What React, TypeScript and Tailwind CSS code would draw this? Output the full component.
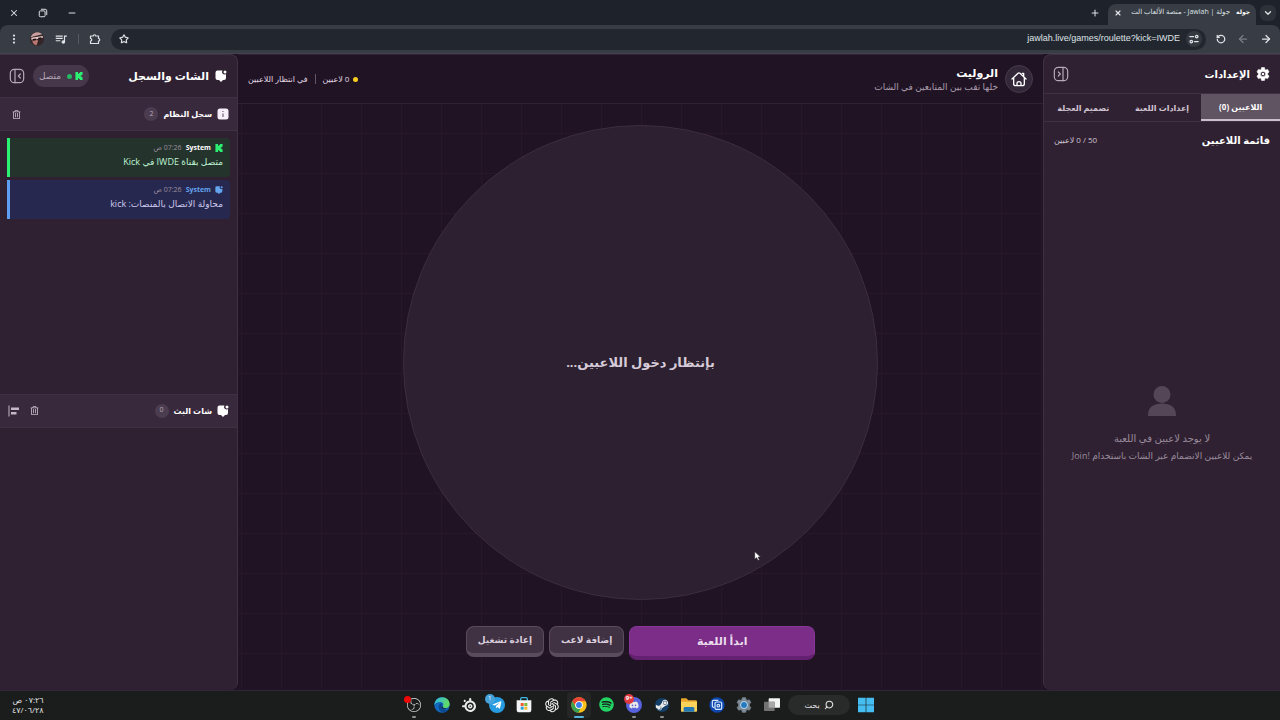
import type { ReactNode } from "react";
import {
  ArrowLeft, ArrowRight, ChevronDown, EllipsisVertical, Minus, Plus, RotateCcw, Search, Star, X,
} from "lucide-react";
import { FaDiscord, FaSpotify, FaSteamSymbol, FaTelegramPlane, FaRegTrashAlt } from "react-icons/fa";
import { MdQueueMusic } from "react-icons/md";
import { SiObsstudio, SiSteelseries } from "react-icons/si";
import { AiOutlineOpenAI } from "react-icons/ai";

function KickIcon({ className }: { className: string }) {
  return (
    <svg viewBox="0 0 24 24" className={className} fill="currentColor" aria-hidden="true">
      <path d="M1.3 0h8v5.3H12V2.7h2.7V0h8v8H20v2.7h-2.7v2.6H20V16h2.7v8h-8v-2.7H12v-2.6H9.3V24h-8Z" />
    </svg>
  );
}

function ChatIcon({ className }: { className: string }) {
  return (
    <svg viewBox="0 0 24 24" className={className} fill="currentColor" aria-hidden="true">
      <path d="M5 1h10a5 5 0 0 0 7 7v8a4 4 0 0 1-4 4h-2l-4 4-4-4H5a4 4 0 0 1-4-4V5a4 4 0 0 1 4-4Z" />
      <circle cx="20" cy="4" r="3" />
    </svg>
  );
}

function InfoIcon() {
  return (
    <svg viewBox="0 0 24 24" className="size-3" aria-hidden="true">
      <rect x="1" y="1" width="22" height="22" rx="5" fill="#f6eef8" />
      <path d="M12 11v7M12 6v2" stroke="#7b6c7e" strokeWidth="2.6" />
    </svg>
  );
}

function GearIcon({ className }: { className: string }) {
  return (
    <svg viewBox="0 0 24 24" className={className} aria-hidden="true">
      <path
        fill="currentColor"
        stroke="currentColor"
        strokeLinejoin="round"
        fillRule="evenodd"
        d="M9.5 1h5l.7 3.2 1.6.9 3.1-1 2.5 4.3-2.4 2.2v2.8l2.4 2.2-2.5 4.3-3.1-1-1.6.9-.7 3.2h-5l-.7-3.2-1.6-.9-3.1 1-2.5-4.3L4 13.4v-2.8L1.6 8.4l2.5-4.3 3.1 1 1.6-.9ZM12 7.5a4.5 4.5 0 1 0 0 9 4.5 4.5 0 0 0 0-9Z"
      />
      <circle cx="12" cy="12" r="2.200" fill="currentColor" />
    </svg>
  );
}

function PanelToggleIcon({ side }: { side: "left" | "right" }) {
  return (
    <svg viewBox="0 0 24 24" className="size-4" fill="none" stroke="currentColor" strokeWidth="1.8" strokeLinecap="round" strokeLinejoin="round" aria-hidden="true">
      <rect x="2" y="2" width="20" height="20" rx="6" />
      {side === "left" ? <path d="M9 2v20M17 9l-3 3 3 3" /> : <path d="M15 2v20M8 9l3 3-3 3" />}
    </svg>
  );
}

function HomeIcon() {
  return (
    <svg viewBox="0 0 24 24" className="size-4" fill="none" stroke="currentColor" strokeWidth="2" strokeLinecap="round" strokeLinejoin="round" aria-hidden="true">
      <path d="m1.5 12 9-8.5a2.2 2.2 0 0 1 3 0l9 8.5M4 10v9a3 3 0 0 0 3 3h10a3 3 0 0 0 3-3v-9M19 8V3.5h-2M9 22v-3a3 3 0 0 1 6 0v3" />
    </svg>
  );
}

function TuneIcon() {
  return (
    <svg viewBox="0 0 24 24" className="size-2.5" fill="none" stroke="currentColor" strokeWidth="3" strokeLinecap="round" aria-hidden="true">
      <path d="M2 6h9M13 18h9" />
      <circle cx="18.5" cy="6" r="3" />
      <circle cx="5.5" cy="18" r="3" />
    </svg>
  );
}

function ExtensionIcon() {
  return (
    <svg viewBox="0 0 24 24" className="size-3" fill="none" stroke="currentColor" strokeWidth="2.4" strokeLinejoin="round" aria-hidden="true">
      <path d="M3 6h5.500a2.500 2.500 0 0 1 5 0H19v5a2.500 2.500 0 0 1 0 5v5H3v-5a2.500 2.500 0 0 0 0-5Z" />
    </svg>
  );
}

function RestoreIcon() {
  return (
    <svg viewBox="0 0 24 24" className="size-2.5" fill="none" stroke="currentColor" strokeWidth="2.4" strokeLinejoin="round" aria-hidden="true">
      <rect x="3" y="7" width="14" height="14" rx="2.500" />
      <path d="M7 3h10a4 4 0 0 1 4 4v10" />
    </svg>
  );
}

function AlignIcon() {
  return (
    <svg viewBox="0 0 24 24" className="size-3" fill="none" stroke="currentColor" aria-hidden="true">
      <path d="M2 1v22" strokeWidth="2" />
      <path d="M6 7.5h16M6 16.5h11" strokeWidth="5" />
    </svg>
  );
}

function AvatarIcon() {
  return (
    <svg viewBox="0 0 24 24" className="size-3.5" aria-hidden="true">
      <circle cx="12" cy="12" r="12" fill="#332528" />
      <path d="M1 9a12 12 0 0 1 20-5L9 7Z" fill="#c9a0a0" />
      <path d="m2 10 20-3v3L3 14Z" fill="#f0cccc" />
      <path d="M4 14c5-2 8-1 10 1l-3 8C7 22 4 19 4 14Z" fill="#b87672" />
      <path d="m4 12 7-1-1 3-5 1Zm10-2 6-1-2 4-4-1Z" fill="#161214" />
    </svg>
  );
}

function EdgeIcon() {
  return (
    <svg viewBox="0 0 24 24" className="size-4" aria-hidden="true">
      <defs>
        <linearGradient id="edge-top" x1="0" y1="0" x2="1" y2="0.4">
          <stop offset="0" stopColor="#2bb5ec" />
          <stop offset="1" stopColor="#63dc62" />
        </linearGradient>
      </defs>
      <circle cx="12" cy="12" r="11.5" fill="#1268bd" />
      <path d="M.5 12C1 5 6 .5 12 .5c7 0 11.500 5 11.500 10 0 4-3 6-6 6-3.500 0-5-1.500-4-3 2-3-1-6-4.500-6-4 0-7 2-8.500 4.500Z" fill="url(#edge-top)" />
      <path d="M7.500 12c-2 6 2 11 7 11 3 0 6-2 8-5-5 3-11 1-11-4 0-2 1-3 1-4-2-1-4 0-5 2Z" fill="#0c4b93" />
      <path d="M11.500 13c-1 4 4 7 9 4-4 1-7 0-7.500-2Z" fill="#191b1b" />
    </svg>
  );
}

function ChromeIcon() {
  return (
    <svg viewBox="0 0 24 24" className="size-4" aria-hidden="true">
      <circle cx="12" cy="12" r="11.5" fill="#fbc116" />
      <path d="M2 6.3A11.5 11.5 0 0 1 22 6.3H12A5.7 5.7 0 0 0 7 14.8Z" fill="#e94435" />
      <path d="M2 6.3 7.100 15a5.700 5.700 0 0 0 7.500 2L11 23.500A11.500 11.500 0 0 1 2 6.300Z" fill="#34a353" />
      <circle cx="12" cy="12" r="5.7" fill="#fff" />
      <circle cx="12" cy="12" r="4.4" fill="#3c7fea" />
    </svg>
  );
}

function StoreIcon() {
  return (
    <svg viewBox="0 0 24 24" className="size-4" aria-hidden="true">
      <path d="M7 6V3a2 2 0 0 1 2-2h6a2 2 0 0 1 2 2v3" fill="none" stroke="#3fb7e4" strokeWidth="2" />
      <path d="M1 5h22v14a4 4 0 0 1-4 4H5a4 4 0 0 1-4-4Z" fill="#f3f5f6" />
      <path d="M7 9h4.5v4.500H7Z" fill="#ed5a33" />
      <path d="M12.500 9H17v4.500h-4.500Z" fill="#7fb93c" />
      <path d="M7 14.500h4.500V19H7Z" fill="#2da0dc" />
      <path d="M12.500 14.500H17V19h-4.500Z" fill="#f7b92b" />
    </svg>
  );
}

function FolderIcon() {
  return (
    <svg viewBox="0 0 24 24" className="size-4" aria-hidden="true">
      <path d="M0 3a1 1 0 0 1 1-1h7l3 3h11a2 2 0 0 1 2 2v4H0Z" fill="#e8a62c" />
      <path d="M0 7h24v14a1 1 0 0 1-1 1H1a1 1 0 0 1-1-1Z" fill="#fbd35a" />
      <path d="M4 22v-5a2 2 0 0 1 2-2h12a2 2 0 0 1 2 2v5Z" fill="#2378b5" />
    </svg>
  );
}

function CopyAppIcon() {
  return (
    <svg viewBox="0 0 24 24" className="size-4" aria-hidden="true">
      <circle cx="12" cy="12" r="11.5" fill="#0d47ae" />
      <g fill="none" stroke="#d8e9ff" strokeWidth="1.8">
        <path d="M8 15.500H7a2 2 0 0 1-2-2V7a2 2 0 0 1 2-2h7" />
        <rect x="9" y="7.500" width="10" height="11" rx="2" />
        <circle cx="14" cy="13" r="2" />
      </g>
    </svg>
  );
}

function TaskViewIcon() {
  return (
    <svg viewBox="0 0 24 24" className="size-4" aria-hidden="true">
      <rect x="7" y="2" width="17" height="14" rx="1" fill="#f3f3f3" />
      <rect x="0" y="7" width="16" height="14" rx="1" fill="#727272" />
      <path d="M7 7h9v9H7Z" fill="#a8a8a8" />
    </svg>
  );
}

function WindowsIcon() {
  return (
    <svg viewBox="0 0 24 24" className="size-4" aria-hidden="true">
      <path d="M0 1h11.500v10.500H0Zm12.500 0H24v10.500H12.500ZM0 12.500h11.500V23H0Zm12.500 0H24V23H12.500Z" fill="#45bdf1" />
    </svg>
  );
}

function SettingsAppIcon() {
  return (
    <span className="relative flex text-[#7e8b96]">
      <GearIcon className="size-4" />
      <span className="absolute inset-1 rounded-full border border-[#b9d8ee] bg-[#2678bd]" />
    </span>
  );
}

function TaskApp({ label, mark, badge, children }: { label: string; mark?: "open" | "active"; badge?: ReactNode; children: ReactNode }) {
  return (
    <button
      type="button"
      aria-label={label}
      className={`relative flex h-[26px] w-6 items-center justify-center rounded-sm text-[#e9e9e9] ${mark === "active" ? "bg-[#262626]" : ""}`}
    >
      {children}
      {badge}
      {mark === "open" && <span className="absolute bottom-0 h-0.5 w-1 rounded-full bg-[#8d8d8d]" />}
      {mark === "active" && <span className="absolute bottom-0 h-0.5 w-2.5 rounded-full bg-[#55b4dc]" />}
    </button>
  );
}

function BrowserBar() {
  return (
    <header className="shrink-0 bg-[#1d222b] text-[#dfe2e6]">
      <div className="flex h-[25px] items-center ps-1">
        <button type="button" aria-label="البحث في علامات التبويب" className="flex size-4 items-center justify-center rounded-md bg-[#2d323a]">
          <ChevronDown className="size-2.5" strokeWidth={3} />
        </button>
        <div className="ms-1 flex h-[21px] items-center gap-1.5 self-end rounded-t-lg bg-[#383d45] px-1.5 pb-1">
          <span className="text-[6px] font-bold text-white">جولة</span>
          <span className="w-[102px] text-[7px] whitespace-nowrap">جولة | Jawlah - منصة الألعاب الت</span>
          <button type="button" aria-label="إغلاق علامة التبويب">
            <X className="size-2" strokeWidth={3.5} />
          </button>
        </div>
        <button type="button" aria-label="علامة تبويب جديدة" className="ms-2">
          <Plus className="size-2.5" strokeWidth={2.5} />
        </button>
        <div className="ms-auto flex items-center gap-[19px] pe-[9px]">
          <button type="button" aria-label="تصغير"><Minus className="size-2.5" strokeWidth={2.5} /></button>
          <button type="button" aria-label="استعادة"><RestoreIcon /></button>
          <button type="button" aria-label="إغلاق"><X className="size-2.5" strokeWidth={2.5} /></button>
        </div>
      </div>
      <div className="flex h-[29px] items-center rounded-t-lg border-b border-[#42444b] bg-[#383d45] px-2">
        <div className="flex items-center gap-[11px]">
          <button type="button" aria-label="للأمام"><ArrowRight className="size-3" strokeWidth={2.5} /></button>
          <button type="button" aria-label="رجوع" className="text-[#787d84]"><ArrowLeft className="size-3" strokeWidth={2.5} /></button>
          <button type="button" aria-label="إعادة تحميل"><RotateCcw className="size-2.5" strokeWidth={3} /></button>
        </div>
        <div className="ms-2.5 flex h-[21px] flex-1 items-center gap-1.5 rounded-full bg-[#22272f] px-1">
          <span className="flex size-4 items-center justify-center rounded-full bg-[#343941]"><TuneIcon /></span>
          <input
            type="text"
            dir="ltr"
            aria-label="شريط العنوان"
            defaultValue="jawlah.live/games/roulette?kick=IWDE"
            className="min-w-0 flex-1 bg-transparent text-right font-['Liberation_Sans',sans-serif] text-[9px] outline-none"
          />
          <button type="button" aria-label="إضافة إشارة" className="pe-1"><Star className="size-2.5" strokeWidth={2.8} /></button>
        </div>
        <div className="ms-2.5 flex items-center gap-2.5">
          <button type="button" aria-label="الإضافات"><ExtensionIcon /></button>
          <span className="h-2.5 w-px bg-[#555a61]" />
          <button type="button" aria-label="الوسائط"><MdQueueMusic className="size-3.5" /></button>
          <button type="button" aria-label="الملف الشخصي"><AvatarIcon /></button>
          <button type="button" aria-label="القائمة"><EllipsisVertical className="size-3" strokeWidth={2.5} /></button>
        </div>
      </div>
    </header>
  );
}

function SettingsPanel() {
  return (
    <aside className="flex w-[237px] shrink-0 flex-col overflow-hidden rounded-l-lg border-e border-t border-[#403044] bg-[#2f2131]">
      <div className="flex h-[38px] items-center justify-between ps-2.5 pe-[9px]">
        <h2 className="flex items-center gap-1.5 text-[10px] font-bold text-white">
          <GearIcon className="size-3.5" />
          الإعدادات
        </h2>
        <button type="button" aria-label="طي الإعدادات" className="text-[#b6a8b9]"><PanelToggleIcon side="right" /></button>
      </div>
      <div className="grid h-[29px] grid-cols-3 border-y border-[#403044] text-[8px] font-bold text-[#cfc4d1]">
        <button type="button" className="border-b-2 border-[#cbbfce] bg-[#605362] text-white">اللاعبين (0)</button>
        <button type="button">إعدادات اللعبة</button>
        <button type="button">تصميم العجلة</button>
      </div>
      <div className="flex h-9 items-center justify-between px-2.5">
        <h3 className="text-[10px] font-bold text-white">قائمة اللاعبين</h3>
        <span className="text-[8px] text-[#cfc4d1]">50 / 0 لاعبين</span>
      </div>
      <div className="flex flex-1 flex-col items-center justify-center">
        <svg viewBox="0 0 28 30" className="h-[30px] w-7" fill="#554657" aria-hidden="true">
          <circle cx="14" cy="8.5" r="8.5" />
          <path d="M0 30v-1c0-8 6-11.500 14-11.500S28 21 28 29v1Z" />
        </svg>
        <p className="mt-4 text-[10px] leading-3 text-[#9a8c9d]">لا يوجد لاعبين في اللعبة</p>
        <p className="mt-1.5 text-[9px] leading-3 text-[#9a8c9d]">يمكن للاعبين الانضمام عبر الشات باستخدام <bdi dir="rtl">!Join</bdi></p>
      </div>
    </aside>
  );
}

function Wheel() {
  return (
    <main className="flex min-w-0 flex-1 flex-col bg-[#201324] bg-[linear-gradient(to_right,#281729_1px,transparent_1px),linear-gradient(to_bottom,#281729_1px,transparent_1px)] bg-size-[40px_40px] bg-position-[3px_39px]">
      <div className="flex h-[50px] shrink-0 items-center justify-between border-y border-[#302136] bg-[#201324] px-2.5">
        <div className="flex items-center gap-[7px]">
          <button type="button" aria-label="الرئيسية" className="flex size-7 items-center justify-center rounded-full border border-[#463a4b] bg-[#33273a] text-white">
            <HomeIcon />
          </button>
          <div>
            <h1 className="text-[11px] leading-4 font-bold text-white">الروليت</h1>
            <p className="text-[9px] leading-3 text-[#aa9dac]">خلها تقب بين المتابعين في الشات</p>
          </div>
        </div>
        <div className="flex items-center gap-[7px] text-[8px] text-[#e1d7e3]">
          <span className="flex items-center gap-1"><span className="size-[5px] rounded-full bg-[#f8cd21]" />0 لاعبين</span>
          <span className="h-2.5 w-px bg-[#66566a]" />
          <span>في انتظار اللاعبين</span>
        </div>
      </div>
      <div className="flex min-h-0 flex-1 justify-center pt-[21px]">
        <div className="flex aspect-square h-full items-center justify-center rounded-full border border-[#3c2d40] bg-[#2d2030]">
          <p className="text-[13px] font-bold text-[#d6cbd8]">بإنتظار دخول اللاعبين...</p>
        </div>
      </div>
      <div className="flex shrink-0 items-start justify-center gap-[5px] pt-[26px] pb-[30px] text-[#d9cedb]">
        <button type="button" className="h-[34px] w-[186px] rounded-lg border border-b-4 border-[#873797] border-b-[#642071] bg-[#7b2d87] text-[11px] font-bold text-[#eadced]">ابدأ اللعبة</button>
        <button type="button" className="h-[31px] rounded-lg border border-b-4 border-[#5a4b5d] bg-[#403143] px-[11px] text-[9px] font-bold">إضافة لاعب</button>
        <button type="button" className="h-[31px] rounded-lg border border-b-4 border-[#5a4b5d] bg-[#403143] px-[11px] text-[9px] font-bold">إعادة تشغيل</button>
      </div>
    </main>
  );
}

function SectionHeader({ icon, title, count, tools }: { icon: ReactNode; title: string; count: number; tools: ReactNode }) {
  return (
    <div className="flex h-[34px] shrink-0 items-center justify-between border-y border-[#403044] bg-[#39293c] px-2">
      <h3 className="flex items-center gap-[5px] text-[8px] font-bold text-white">
        {icon}
        {title}
        <span className="flex size-3.5 items-center justify-center rounded-full bg-[#4c3c50] text-[7px] font-normal text-[#b5a8b8]">{count}</span>
      </h3>
      <div className="flex items-center gap-1.5 text-[#c4b8c6]">{tools}</div>
    </div>
  );
}

function LogEntry({ tone, icon, children }: { tone: "kick" | "info"; icon: ReactNode; children: ReactNode }) {
  return (
    <li className={`h-[39px] rounded-r border-e-[3px] px-[7px] pt-1 ${tone === "kick" ? "border-[#2bf071] bg-[#25332d] text-[#bdf3d1]" : "border-[#5d9df2] bg-[#27284f] text-[#cdc9ee]"}`}>
      <div className="flex h-3 items-center gap-1 text-[7px]">
        {icon}
        <strong className={tone === "kick" ? "text-white" : "text-[#64a3ee]"}>System</strong>
        <span className="text-[#9a8f9d]">07:26 ص</span>
      </div>
      <p className="text-[9px] leading-4">{children}</p>
    </li>
  );
}

function ChatPanel() {
  const trash = (
    <button type="button" aria-label="مسح" className="flex size-4 items-center justify-center">
      <FaRegTrashAlt className="size-[9px]" />
    </button>
  );
  return (
    <aside className="flex w-[238px] shrink-0 flex-col overflow-hidden rounded-r-lg border-s border-t border-[#403044] bg-[#2f2131]">
      <div className="flex h-[42px] shrink-0 items-center justify-between ps-2.5 pe-[9px]">
        <h2 className="flex items-center gap-1.5 text-[11px] font-bold text-white">
          <ChatIcon className="size-3" />
          الشات والسجل
        </h2>
        <div className="flex items-center gap-2 text-[#b6a8b9]">
          <span className="flex h-[22px] items-center rounded-full bg-[#46374a] px-1.5 text-[9px]">
            <KickIcon className="me-[3px] size-2 text-[#2bf071]" />
            <span className="me-1.5 size-[5px] rounded-full bg-[#25b964]" />
            متصل
          </span>
          <button type="button" aria-label="طي الشات"><PanelToggleIcon side="left" /></button>
        </div>
      </div>
      <section className="flex flex-1 flex-col">
        <SectionHeader icon={<InfoIcon />} title="سجل النظام" count={2} tools={trash} />
        <ul className="flex flex-col gap-[3px] px-[7px] py-[7px]">
          <LogEntry tone="kick" icon={<KickIcon className="size-2 text-[#2bf071]" />}>متصل بقناة IWDE في Kick</LogEntry>
          <LogEntry tone="info" icon={<ChatIcon className="size-2 text-[#64a3ee]" />}>محاولة الاتصال بالمنصات: kick</LogEntry>
        </ul>
      </section>
      <section className="flex flex-1 flex-col">
        <SectionHeader
          icon={<ChatIcon className="size-3" />}
          title="شات البث"
          count={0}
          tools={<>{trash}<button type="button" aria-label="محاذاة"><AlignIcon /></button></>}
        />
      </section>
    </aside>
  );
}

function Taskbar() {
  return (
    <footer dir="ltr" className="grid h-[30px] shrink-0 grid-cols-[1fr_auto_1fr] items-center border-t border-[#30263a] bg-[#1b1c1c] pb-0.5">
      <div className="flex ps-3">
        <time dir="rtl" className="text-[8px] leading-[10px] text-[#e5e5e5]">
          ٠٧:٢٦ ص
          <br />
          ٤٧/٠٦/٢٨
        </time>
      </div>
      <nav aria-label="شريط المهام" className="flex items-center gap-1">
        <div className="flex w-[382px] justify-between">
          <TaskApp label="OBS" mark="open" badge={<span className="absolute top-1 left-0.5 size-[7px] rounded-full bg-[#f00808]" />}>
            <SiObsstudio className="size-3.5" />
          </TaskApp>
          <TaskApp label="Edge"><EdgeIcon /></TaskApp>
          <TaskApp label="SteelSeries"><SiSteelseries className="size-3.5" /></TaskApp>
          <TaskApp
            label="Telegram"
            badge={<span className="absolute top-0.5 left-0 flex size-2.5 items-center justify-center rounded-full bg-[#45a2db] text-[6px] text-white">1</span>}
          >
            <span className="flex size-4 items-center justify-center rounded-full bg-[#279bdf] text-white"><FaTelegramPlane className="size-2.5" /></span>
          </TaskApp>
          <TaskApp label="Store"><StoreIcon /></TaskApp>
          <TaskApp label="ChatGPT"><AiOutlineOpenAI className="size-[18px]" /></TaskApp>
          <TaskApp label="Chrome" mark="active"><ChromeIcon /></TaskApp>
          <TaskApp label="Spotify"><FaSpotify className="size-[15px] text-[#20d362]" /></TaskApp>
          <TaskApp
            label="Discord"
            mark="open"
            badge={<span className="absolute top-0.5 left-0.5 flex size-2.5 items-center justify-center rounded-full bg-[#df3940] text-[6px] font-bold text-white">9+</span>}
          >
            <span className="flex size-4 items-center justify-center rounded-full bg-[#5662dc]"><FaDiscord className="size-2.5" /></span>
          </TaskApp>
          <TaskApp label="Steam" mark="open">
            <span className="flex size-3.5 items-center justify-center rounded-full bg-[#123e68]"><FaSteamSymbol className="size-3.5" /></span>
          </TaskApp>
          <TaskApp label="Explorer"><FolderIcon /></TaskApp>
          <TaskApp label="Copy"><CopyAppIcon /></TaskApp>
          <TaskApp label="Settings"><SettingsAppIcon /></TaskApp>
          <TaskApp label="Task view"><TaskViewIcon /></TaskApp>
        </div>
        <button type="button" className="flex h-5 w-[62px] items-center justify-center gap-1 rounded-full bg-[#292a2a] text-[8px] text-[#e5e5e5]">
          بحث
          <Search className="size-2.5 -scale-x-100" strokeWidth={2.5} />
        </button>
        <TaskApp label="Start"><WindowsIcon /></TaskApp>
      </nav>
    </footer>
  );
}

export default function App() {
  return (
    <div dir="rtl" className="relative flex h-screen flex-col overflow-hidden bg-[#201324] font-['Open_Sans','DejaVu_Sans',sans-serif]">
      <BrowserBar />
      <div className="flex min-h-0 flex-1">
        <SettingsPanel />
        <Wheel />
        <ChatPanel />
      </div>
      <Taskbar />
      <svg viewBox="0 0 12 18" className="pointer-events-none absolute top-[551px] left-[754px] h-[10px] w-[7px]" aria-hidden="true">
        <path d="M1 1v14l3.500-3 2.500 5 2.500-1.200L7 11h4.500Z" fill="#fff" stroke="#221a25" />
      </svg>
    </div>
  );
}
